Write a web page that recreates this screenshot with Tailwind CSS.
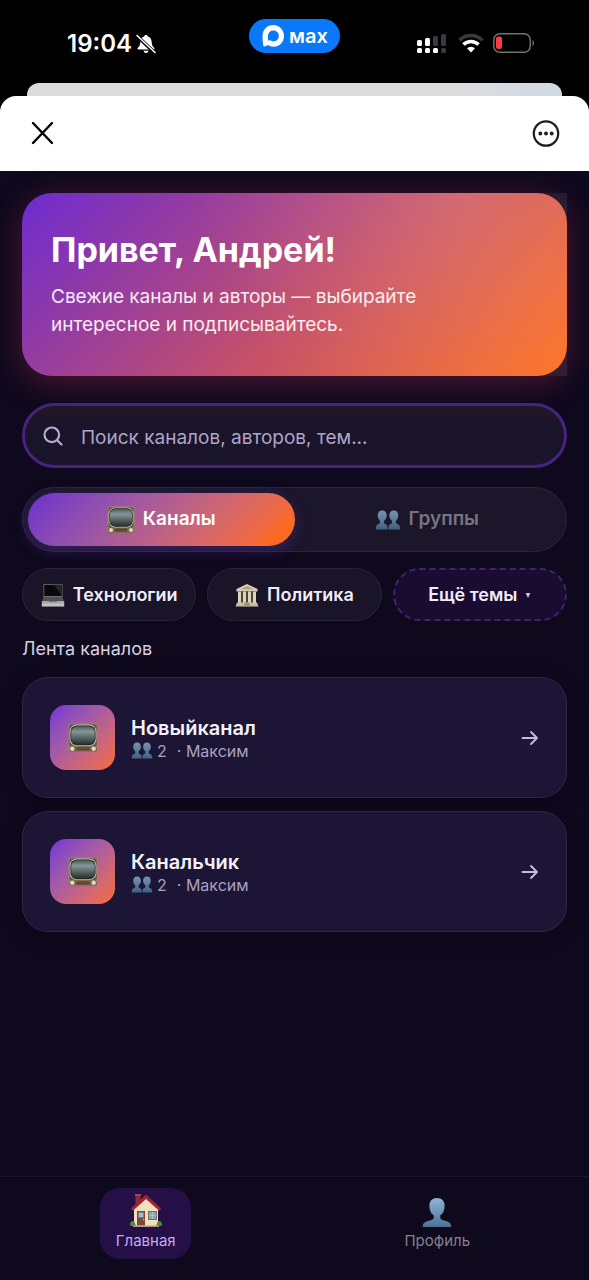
<!DOCTYPE html>
<html lang="ru">

<head>
    <meta charset="utf-8">
    <meta name="viewport" content="width=device-width, initial-scale=1">
    <title>Каналы</title>
    <script src="https://cdn.jsdelivr.net/npm/@tailwindcss/browser@4"></script>
</head>

<body class="bg-black font-['Inter','Liberation_Sans',sans-serif] text-white">

    <!-- Shared icons -->
    <svg class="absolute size-0" aria-hidden="true">
        <defs>
            <linearGradient id="screen" x1="0" y1="0" x2="0" y2="1">
                <stop offset="0" stop-color="#4b5b5c" />
                <stop offset=".3" stop-color="#869798" />
                <stop offset="1" stop-color="#25302f" />
            </linearGradient>
            <linearGradient id="person" x1="0" y1="0" x2="0" y2="1">
                <stop offset="0" stop-color="#8fb4d4" />
                <stop offset="1" stop-color="#4b7396" />
            </linearGradient>
            <linearGradient id="steel" x1="0" y1="0" x2="0" y2="1">
                <stop offset="0" stop-color="#9d9d9f" />
                <stop offset="1" stop-color="#cfcfcf" />
            </linearGradient>
        </defs>
        <symbol id="tv" viewBox="0 0 28 28">
            <rect x=".5" y=".5" width="27" height="26" rx="1.500" fill="#9c8a6b" />
            <rect x="1.200" y="1.200" width="25.600" height="20.500" rx="1.500" fill="#655a48" />
            <rect x="1.500" y="1.500" width="25" height="20" rx="6.500" fill="#c9c3ad" />
            <rect x="2.300" y="2.300" width="23.400" height="18.400" rx="6" fill="#1c2322" />
            <rect x="3" y="3" width="22" height="17" rx="5.500" fill="url(#screen)" />
            <rect x="1" y="22" width="26" height="4.500" rx="1.500" fill="#7a6249" />
            <path d="M8 23.300h12M8 25h12" stroke="#4c3b2b" stroke-width="1" />
            <circle cx="4" cy="24" r="2.500" fill="#e4d8bd" stroke="#5e4c38" stroke-width=".7" />
            <circle cx="24" cy="24" r="2.500" fill="#e4d8bd" stroke="#5e4c38" stroke-width=".7" />
        </symbol>
        <symbol id="people" viewBox="0 0 24 20">
            <path fill="url(#person)" d="M6.200.5C3.200.5 1.600 2.600 1.700 5.500c0 2.400.9 4.200 2.300 5.200v1.800c0 1-.7 1.400-2 1.800C.5 14.800 0 16 0 19.500h11.600c0-3.500-.4-4.700-1.800-5.200-1.200-.4-1.700-.8-1.700-1.800v-1.800c1.500-1 2.600-2.800 2.600-5.200C10.700 2.600 9.200.5 6.200.5z" />
            <path fill="url(#person)" d="M17.800.5c-3 0-4.500 2.100-4.500 5 0 2.400 1.100 4.200 2.600 5.200v1.800c0 1-.5 1.400-1.700 1.800-1.400.5-1.800 1.700-1.800 5.200H24c0-3.500-.5-4.700-2-5.200-1.300-.4-2-.8-2-1.800v-1.800c1.400-1 2.300-2.800 2.300-5.200.1-2.900-1.500-5-4.500-5z" />
        </symbol>
        <symbol id="arrow" viewBox="0 0 18 16">
            <path d="M1.500 8h14.500M10 2l6 6-6 6" fill="none" stroke="currentColor" stroke-width="1.900" stroke-linecap="round" stroke-linejoin="round" />
        </symbol>
    </svg>

    <div class="flex min-h-screen flex-col">

        <!-- Status bar -->
        <div class="grid h-[83px] grid-cols-3 items-start">
            <div class="flex items-center gap-1 pt-7 pl-[67px]">
                <span class="text-2xl font-semibold">19:04</span>
                <svg class="size-5" viewBox="0 0 20 20">
                    <path fill="#fff" d="M10 1c-1 0-1.700.6-1.900 1.400C5.600 3.200 4.400 5.200 4.300 8c-.1 3-.8 4.300-2.500 5.800-.7.700-.3 1.700.7 1.700h15c1 0 1.400-1 .7-1.700-1.700-1.500-2.400-2.800-2.500-5.800-.1-2.800-1.300-4.800-3.800-5.600C11.700 1.600 11 1 10 1zM7.500 16.700c.3 1.300 1.200 2.300 2.500 2.300s2.200-1 2.500-2.300z" />
                    <path d="M1 2l18 17" stroke="#000" stroke-width="3.600" />
                    <path d="M1 1.500l18 17" stroke="#fff" stroke-width="1.500" stroke-linecap="round" />
                </svg>
            </div>
            <div class="flex justify-center pt-[19px]">
                <div class="flex h-[34px] items-center gap-1 rounded-full bg-[#0a78f8] px-3">
                    <svg class="size-6" viewBox="0 0 24 24">
                        <path fill="#fff" fill-rule="evenodd" d="M12.500 1C6 1 1.500 5.700 1.500 12c0 3.500.4 6.500.8 9.400.2 1.400 2.300 1.300 4.700-.3 1.600 1.100 3.200 1.700 5.400 1.700C18.500 22.800 23 18 23 12S18.500 1 12.500 1zm0 5.600c3 0 5.300 2.300 5.300 5.400s-2.300 5.300-5.300 5.300c-1.400 0-2.500-.5-3.600-1.300-.8.700-1.400.9-1.600.3-1-2.800-.8-9.700 5.200-9.700z" />
                    </svg>
                    <span class="text-xl leading-none font-semibold">мах</span>
                </div>
            </div>
            <div class="flex items-center justify-end gap-3 pt-8 pr-[54px]">
                <svg class="h-[22px] w-[30px]" viewBox="0 0 30 22">
                    <g fill="#fff">
                        <rect x="1" y="8" width="5" height="6" rx="1.500" />
                        <rect x="9" y="6" width="5" height="8" rx="1.500" />
                        <rect x="1" y="16" width="5" height="5" rx="1.500" />
                        <rect x="9" y="16" width="5" height="5" rx="1.500" />
                        <rect x="17" y="16" width="5" height="5" rx="1.500" />
                    </g>
                    <g fill="#3a3a3c">
                        <rect x="17" y="4" width="5" height="10" rx="1.500" />
                        <rect x="25" y="2" width="5" height="12" rx="1.500" />
                        <rect x="25" y="16" width="5" height="5" rx="1.500" />
                    </g>
                </svg>
                <svg class="h-5 w-[26px]" viewBox="0 0 26 20" fill="none" stroke-width="3.600">
                    <path d="M1.500 7.200a16.500 16.500 0 0 1 23 0" stroke="#3a3a3c" />
                    <path d="M5.500 11.500a10.800 10.800 0 0 1 15 0" stroke="#fff" />
                    <path d="M13 19.500l-4-4.200a5.800 5.800 0 0 1 8 0z" fill="#fff" stroke="none" />
                </svg>
                <svg class="-ml-1 h-5 w-[43px]" viewBox="0 0 43 20">
                    <rect x="1.750" y=".75" width="36.500" height="18.500" rx="6" fill="none" stroke="#717174" stroke-width="1.500" />
                    <path d="M40.500 7c2 .8 2 5.200 0 6z" fill="#717174" />
                    <rect x="4" y="3.500" width="6" height="12.500" rx="2.500" fill="#ff3b3f" />
                </svg>
            </div>
        </div>

        <!-- Sheet header -->
        <div class="mx-[27px] h-[13px] rounded-t-xl bg-linear-to-r from-[#dcdcdc] from-80% to-[#d0d9e6]"></div>
        <header class="flex h-[75px] items-center justify-between rounded-t-2xl bg-white px-[29px] text-[#1c1c1e]">
            <button type="button" aria-label="Закрыть">
                <svg class="size-[27px]" viewBox="0 0 27 27" fill="none" stroke="#000" stroke-width="2.400" stroke-linecap="round">
                    <path d="M4 3l19 20M23 3L4 23" />
                </svg>
            </button>
            <button type="button" aria-label="Меню">
                <svg class="size-7" viewBox="0 0 28 28">
                    <circle cx="14" cy="13.500" r="12.200" fill="none" stroke="currentColor" stroke-width="2.200" />
                    <circle cx="8.300" cy="13.500" r="1.900" fill="currentColor" />
                    <circle cx="14" cy="13.500" r="1.900" fill="currentColor" />
                    <circle cx="19.700" cy="13.500" r="1.900" fill="currentColor" />
                </svg>
            </button>
        </header>

        <div class="flex flex-1 flex-col bg-[#0e091d]">
            <main class="flex-1 px-[22px] pt-[22px]">

                <!-- Greeting -->
                <div class="bg-linear-to-l from-white/8 to-transparent to-10%">
                    <section class="rounded-[30px] bg-[radial-gradient(circle_at_80%_0%,rgb(255_255_255/.12),transparent_55%),linear-gradient(135deg,#6d2bd0,#c4506a_54%,#ff7322)] px-[29px] pt-9 pb-[37px] shadow-[0_6px_32px_rgb(200_50_90/.35)]">
                        <h1 class="text-[34px] leading-[42px] font-bold">Привет, Андрей!</h1>
                        <p class="mt-3 max-w-[420px] text-[19px] leading-7 text-white/90">Свежие каналы и авторы — выбирайте интересное и подписывайтесь.</p>
                    </section>
                </div>

                <!-- Search -->
                <label class="mt-[27px] flex h-[65px] items-center gap-[18px] rounded-full border-3 border-[#45237f] bg-linear-to-b from-[#211626] to-[#1a142a] to-40% px-[18px]">
                    <svg class="size-5 shrink-0 text-[#b6abc9]" viewBox="0 0 20 20" fill="none" stroke="currentColor" stroke-width="2.200" stroke-linecap="round">
                        <circle cx="8.800" cy="8.800" r="7.300" />
                        <path d="M14.200 14.200l4.300 4.300" />
                    </svg>
                    <input type="text" aria-label="Поиск" placeholder="Поиск каналов, авторов, тем..." class="h-full min-w-0 flex-1 bg-transparent pt-1 text-[19px] outline-none placeholder:text-[#b0a5c6]">
                </label>

                <!-- Feed switch -->
                <div class="mt-[19px] grid h-[65px] grid-cols-2 rounded-full border border-[#2a253a] bg-[#1b1629] p-[5px] text-[19px] font-semibold">
                    <button type="button" class="flex items-center justify-center gap-2 rounded-full bg-linear-135 from-[#6d2bd0] to-[#fb6a25] to-90% shadow-[0_4px_16px_rgb(124_58_237/.3)]">
                        <svg class="size-7"><use href="#tv" /></svg>
                        Каналы
                    </button>
                    <button type="button" class="flex items-center justify-center gap-2 text-[#787284]">
                        <svg class="h-5 w-6 opacity-80"><use href="#people" /></svg>
                        Группы
                    </button>
                </div>

                <!-- Topics -->
                <div class="mt-4 grid grid-cols-3 gap-[11px] text-lg leading-6 font-semibold text-[#f1ecfa]">
                    <button type="button" class="flex h-[53px] items-center justify-center gap-2 rounded-full border border-[#2a2439] bg-[#1a1429]">
                        <svg class="size-6" viewBox="0 0 24 24">
                            <path d="M2.500 1h19v13h-19z" fill="#6f6f72" />
                            <path d="M3.300 1.800h17.400V13H3.300z" fill="#09090b" />
                            <path d="M13 1.800h7.700V13z" fill="#252528" />
                            <path d="M2.500 14h19l1.500 5H1z" fill="#505053" />
                            <path d="M.8 18h22.400v5.500H.8z" fill="url(#steel)" />
                            <path d="M8 18h8v1.200H8z" fill="#77777a" />
                        </svg>
                        Технологии
                    </button>
                    <button type="button" class="flex h-[53px] items-center justify-center gap-2 rounded-full border border-[#2a2439] bg-[#1a1429]">
                        <svg class="size-6" viewBox="0 0 24 24">
                            <path d="M12 1l10.500 5v2.500h-21V6z" fill="#d5ceb4" />
                            <path d="M12 3l6.500 3.300h-13z" fill="#aaa184" />
                            <path d="M3 8.500h18V20H3z" fill="#4d4736" />
                            <path d="M3 8.500h3V20H3zM8 8.500h3V20H8zM13 8.500h3V20h-3zM18 8.500h3V20h-3z" fill="#dcd5bd" />
                            <path d="M2 19.500h20l1.500 4H.5z" fill="#c7bfa4" />
                            <path d="M9.500 19.500h5l1 4h-7z" fill="#9f967c" />
                        </svg>
                        Политика
                    </button>
                    <button type="button" class="flex h-[53px] items-center justify-center gap-2 rounded-full border-2 border-dashed border-[#3d2568] bg-[#1a0b30]">
                        Ещё темы
                        <svg class="size-[6px] text-[#c9bfda]" viewBox="0 0 6 6"><path d="M.5 1h5L3 6z" fill="currentColor" /></svg>
                    </button>
                </div>

                <!-- Channel feed -->
                <h2 class="mt-4 text-lg leading-6 text-[#d6d0e0]">Лента каналов</h2>
                <div class="mt-4 flex flex-col gap-[13px]">
                    <a href="#" class="flex h-[121px] items-center gap-4 rounded-[26px] border border-[#2e2745] bg-[#1c1535] px-[27px] shadow-[0_4px_20px_rgb(0_0_0/.25)]">
                        <span class="flex size-[65px] items-center justify-center rounded-2xl bg-linear-135 from-[#7430d8] to-[#fb6a25]">
                            <svg class="size-[30px]"><use href="#tv" /></svg>
                        </span>
                        <span class="flex-1 pt-[2px]">
                            <span class="block text-xl leading-6 font-semibold text-[#f5f1fc]">Новыйканал</span>
                            <span class="flex items-center text-base leading-[22px] text-[#aaa1bf]">
                                <svg class="mr-1 h-[17px] w-[22px] opacity-80"><use href="#people" /></svg>
                                <span>2</span><span class="ml-[10px]">· Максим</span>
                            </span>
                        </span>
                        <svg class="h-4 w-[18px] text-[#c6bbdd]"><use href="#arrow" /></svg>
                    </a>
                    <a href="#" class="flex h-[121px] items-center gap-4 rounded-[26px] border border-[#2e2745] bg-[#1c1535] px-[27px] shadow-[0_4px_20px_rgb(0_0_0/.25)]">
                        <span class="flex size-[65px] items-center justify-center rounded-2xl bg-linear-135 from-[#7430d8] to-[#fb6a25]">
                            <svg class="size-[30px]"><use href="#tv" /></svg>
                        </span>
                        <span class="flex-1 pt-[2px]">
                            <span class="block text-xl leading-6 font-semibold text-[#f5f1fc]">Канальчик</span>
                            <span class="flex items-center text-base leading-[22px] text-[#aaa1bf]">
                                <svg class="mr-1 h-[17px] w-[22px] opacity-80"><use href="#people" /></svg>
                                <span>2</span><span class="ml-[10px]">· Максим</span>
                            </span>
                        </span>
                        <svg class="h-4 w-[18px] text-[#c6bbdd]"><use href="#arrow" /></svg>
                    </a>
                </div>
            </main>

            <!-- Bottom navigation -->
            <nav class="grid h-[104px] grid-cols-2 items-start justify-items-center border-t border-[#1b162a] pt-[11px] pr-[6px] text-[15px] leading-5">
                <a href="#" class="flex h-[71px] w-[91px] flex-col items-center justify-center gap-1 rounded-[20px] bg-[#241047] pb-[3px] text-[#c5a8f0]">
                    <svg class="h-[34px] w-8" viewBox="0 0 32 34">
                        <path d="M5.500 2h5v9h-5z" fill="#8e2b36" />
                        <path d="M5 1h6v2H5z" fill="#b04049" />
                        <path d="M4 16L16 5l12 11v17H4z" fill="#f3dfbd" />
                        <path d="M16 1.500L.8 15.500l2 2.200L16 6l13.200 11.700 2-2.200z" fill="#9c2531" />
                        <rect x="7" y="18" width="8" height="14.500" fill="#7a4a36" />
                        <rect x="8.500" y="19.500" width="5" height="5" fill="#8fc0cf" />
                        <circle cx="13.600" cy="26.500" r=".8" fill="#e5c25c" />
                        <rect x="18" y="18" width="9" height="9" fill="#8b6a4d" />
                        <rect x="19" y="19" width="7" height="7" fill="#6aaec8" />
                        <path d="M22.500 19v7M19 22.500h7" stroke="#d9c8a8" stroke-width=".7" />
                        <path d="M0 32c-.3-3 1.500-4 4-4l2 5H1zM32 32c.3-3-1.500-4-4-4l-2 5h5z" fill="#4e8a39" />
                        <path d="M3 32.500h26V34H3z" fill="#a99a83" />
                    </svg>
                    Главная
                </a>
                <a href="#" class="flex h-[71px] w-[91px] flex-col items-center justify-center gap-1 rounded-[20px] pb-[3px] text-[#87818f]">
                    <svg class="h-[34px] w-8" viewBox="0 0 32 34">
                        <path fill="url(#person)" d="M16 5c-4.800 0-7.600 3.200-7.600 7.400 0 4.600 1.400 8 4.400 10v2.200c0 1.700-1.500 2.300-4.800 3.100-4 1-6.300 2.400-6.300 6.300h28.600c0-3.900-2.300-5.300-6.300-6.300-3.300-.8-4.800-1.400-4.800-3.100v-2.200c3-2 4.400-5.400 4.400-10C23.600 8.200 20.800 5 16 5z" />
                    </svg>
                    Профиль
                </a>
            </nav>
        </div>
    </div>
</body>

</html>
